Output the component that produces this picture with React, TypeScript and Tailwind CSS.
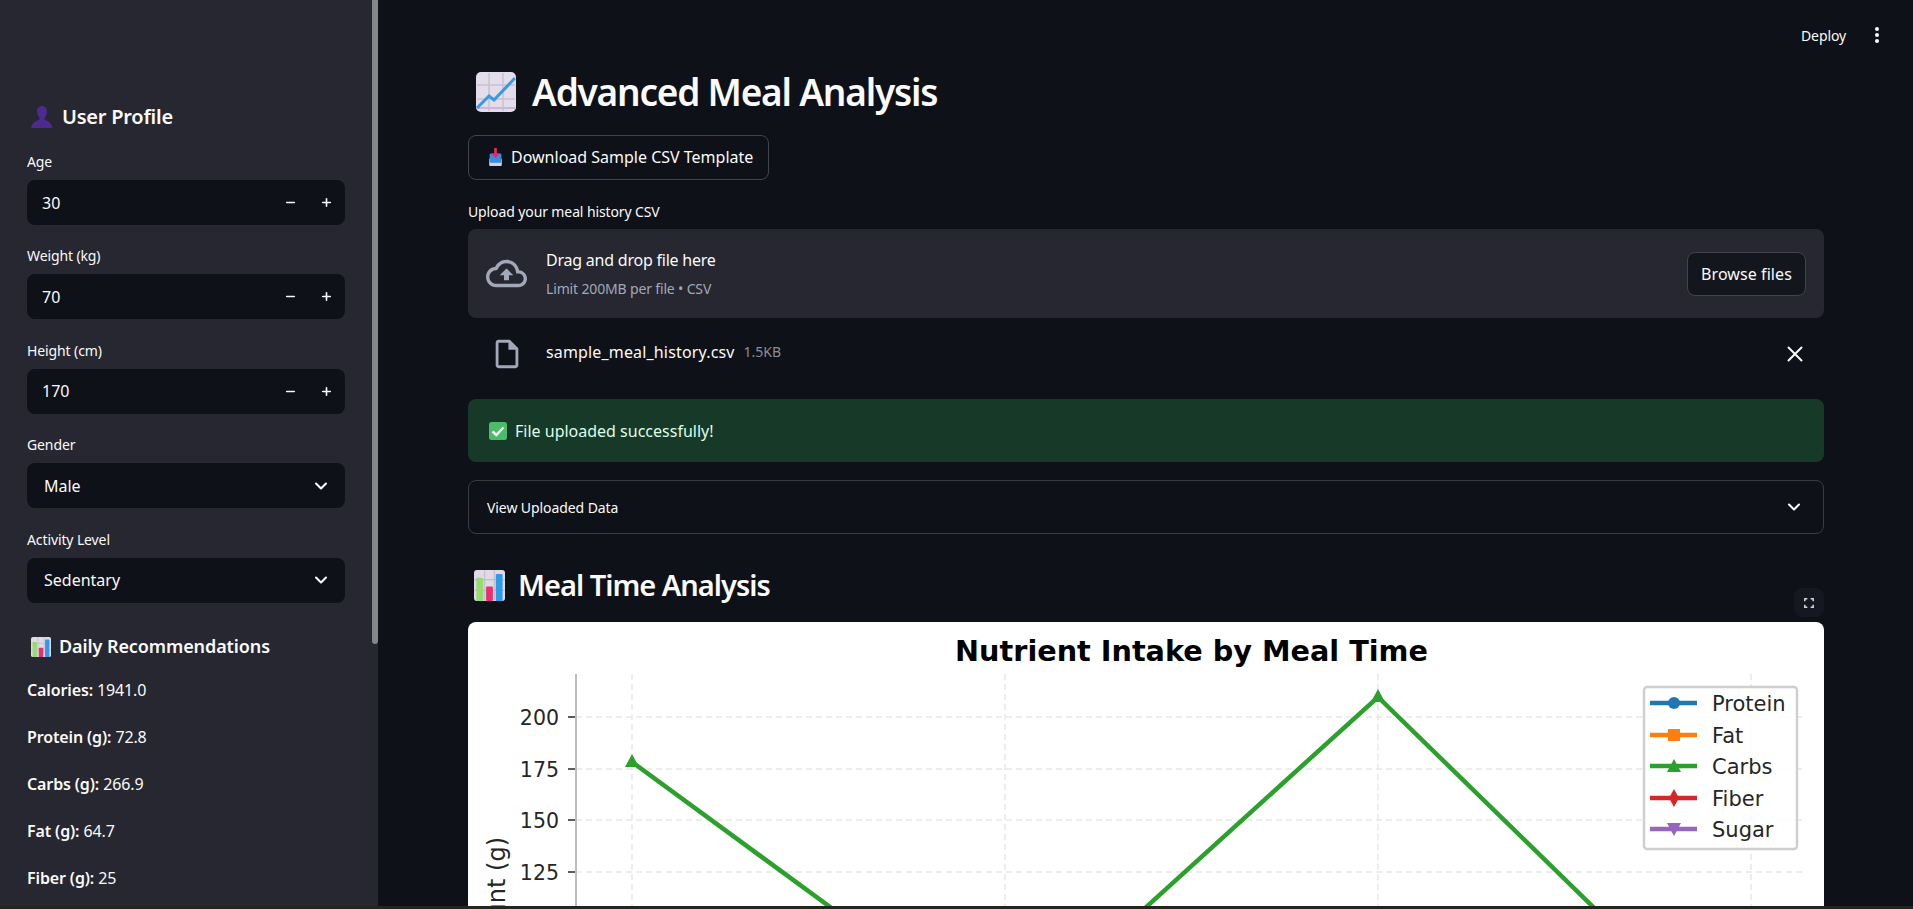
import { ChevronDown, Minus, Plus, X } from "lucide-react";

function ChartEmoji({ className }: { className?: string }) {
  return (
    <svg viewBox="0 0 40 40" className={className}>
      <rect width="40" height="40" rx="5" fill="#e3dcea" />
      <path d="M0 37h40v-2H0z" fill="#c9b8dc" />
      <path d="M13 1v38M27 1v38M1 13h38M1 27h38" stroke="#c8c0d0" strokeWidth="1.5" />
      <path d="M1 36 L13 24 L18 28 L39 6" fill="none" stroke="#3a9ae0" strokeWidth="3" />
    </svg>
  );
}

function BarsEmoji({ className }: { className?: string }) {
  return (
    <svg viewBox="0 0 32 32" className={className}>
      <rect width="32" height="32" rx="3" fill="#e0d9e6" />
      <path d="M11 0v32M21 0v32M0 10h32M0 21h32" stroke="#c4bccc" strokeWidth="1.2" />
      <rect x="2.5" y="8" width="7" height="24" rx="1" fill="#93dc6e" />
      <rect x="12.5" y="17" width="7" height="15" rx="1" fill="#e9306f" />
      <rect x="22.5" y="4" width="7" height="28" rx="1" fill="#2e9bea" />
    </svg>
  );
}

function InboxEmoji({ className }: { className?: string }) {
  return (
    <svg viewBox="0 0 16 20" className={className}>
      <path d="M1 12h14v7a1 1 0 0 1-1 1H2a1 1 0 0 1-1-1z" fill="#d9cfe4" />
      <rect x="1.5" y="6" width="13" height="10.5" rx="1.5" fill="#2f8fe0" />
      <path d="M6.5 0h3v6h3L8 11 3.500 6h3z" fill="#e22c5e" />
    </svg>
  );
}

function CheckEmoji({ className }: { className?: string }) {
  return (
    <svg viewBox="0 0 18 18" className={className}>
      <rect width="18" height="18" rx="2.500" fill="#4cbb6c" />
      <path d="M3.500 9.500l3.800 3.500 7.200-7.500" fill="none" stroke="#f2f7f2" strokeWidth="2.400" />
    </svg>
  );
}

function UserEmoji({ className }: { className?: string }) {
  return (
    <svg viewBox="0 0 22 22" className={className}>
      <path
        d="M11 0c3.200 0 5 2.400 5 5.500 0 2.500-1 4.800-2.500 6v2c2.500 1.300 7 2.500 8 8.500H0c1-6 5.500-7.200 8.500-8.500v-2C7 10.300 6 8 6 5.500 6 2.400 7.800 0 11 0z"
        fill="#4c2a8f"
      />
    </svg>
  );
}

function NumberField({ label, value }: { label: string; value: string }) {
  return (
    <div>
      <div className="h-[22px] mb-[7px] text-[14px] leading-[22px] tracking-[-0.008em] text-[#fafafa]">{label}</div>
      <div className="flex h-[45px] items-center rounded-lg bg-[#0e1117] pl-[15px] pr-[12px] text-[#fafafa]">
        <span className="flex-1 text-[16px]">{value}</span>
        <Minus size={13} strokeWidth={3} className="mr-[23px]" />
        <Plus size={13} strokeWidth={3} />
      </div>
    </div>
  );
}

function SelectField({ label, value }: { label: string; value: string }) {
  return (
    <div>
      <div className="h-[22px] mb-[7px] text-[14px] leading-[22px] tracking-[-0.008em] text-[#fafafa]">{label}</div>
      <div className="flex h-[45px] items-center rounded-lg bg-[#0e1117] pl-[17px] pr-[14px] text-[#fafafa]">
        <span className="flex-1 text-[16px]">{value}</span>
        <ChevronDown size={20} strokeWidth={2.500} />
      </div>
    </div>
  );
}

const RECOMMENDATIONS = [
  { name: "Calories:", value: "1941.0" },
  { name: "Protein (g):", value: "72.8" },
  { name: "Carbs (g):", value: "266.9" },
  { name: "Fat (g):", value: "64.7" },
  { name: "Fiber (g):", value: "25" },
];

function Sidebar() {
  return (
    <aside className="relative h-full w-[378px] shrink-0 overflow-hidden bg-[#262730] pl-[27px] pr-[33px] pt-[103px]">
      <h2 className="flex h-[28px] items-center text-[20px] font-semibold tracking-[-0.012em] text-[#fafafa]">
        <UserEmoji className="ml-[4px] mr-[9px] h-[22px] w-[22px]" />
        User Profile
      </h2>
      <div className="mt-[20px] flex flex-col gap-[20.400px]">
        <NumberField label="Age" value="30" />
        <NumberField label="Weight (kg)" value="70" />
        <NumberField label="Height (cm)" value="170" />
        <SelectField label="Gender" value="Male" />
        <SelectField label="Activity Level" value="Sedentary" />
      </div>
      <h2 className="mt-[30px] flex h-[28px] items-center text-[18px] font-semibold tracking-[-0.005em] text-[#fafafa]">
        <BarsEmoji className="ml-[4px] mr-[8px] h-[20px] w-[20px]" />
        Daily Recommendations
      </h2>
      <div className="mt-[17.500px] flex flex-col gap-[23px]">
        {RECOMMENDATIONS.map((r) => (
          <p key={r.name} className="h-[24px] text-[16px] leading-[24px] tracking-[-0.008em] text-[#fafafa]">
            <strong className="font-semibold">{r.name}</strong> {r.value}
          </p>
        ))}
      </div>
      {/* scrollbar thumb */}
      <div className="absolute right-0 top-0 h-[644px] w-[6px] rounded-b bg-[#85858c]" />
    </aside>
  );
}

const Y_TICKS = [
  { label: "200", y: 95 },
  { label: "175", y: 147 },
  { label: "150", y: 198 },
  { label: "125", y: 250 },
];

const V_GRID = [164, 537, 910, 1283];

function Chart() {
  return (
    <svg viewBox="0 0 1356 640" className="block h-[640px] w-full font-['DejaVu_Sans',sans-serif]">
      <text x="723.500" y="39" textAnchor="middle" fontSize="28.700" fontWeight="700" fill="#000">
        Nutrient Intake by Meal Time
      </text>
      {V_GRID.map((x) => (
        <line key={x} x1={x} x2={x} y1="52" y2="640" stroke="#e8e8e8" strokeWidth="1.500" strokeDasharray="6 4" />
      ))}
      {Y_TICKS.map((t) => (
        <g key={t.label}>
          <line x1="108" x2="1338" y1={t.y} y2={t.y} stroke="#e8e8e8" strokeWidth="1.500" strokeDasharray="6 4" />
          <line x1="100" x2="108" y1={t.y} y2={t.y} stroke="#262626" strokeWidth="1.500" />
          <text x="91" y={t.y + 8} textAnchor="end" fontSize="20.500" fill="#262626">
            {t.label}
          </text>
        </g>
      ))}
      <line x1="108" x2="108" y1="52" y2="640" stroke="#bdbdbd" strokeWidth="2" />
      <text transform="translate(36.500,215) rotate(-90)" textAnchor="end" fontSize="24" fill="#262626">
        Amount (g)
      </text>
      <polyline points="164,140 537,413 910,75 1283,439" fill="none" stroke="#2ca02c" strokeWidth="4.500" />
      <path d="M164 132l7 13h-14z" fill="#2ca02c" />
      <path d="M910 67l7 13h-14z" fill="#2ca02c" />

      <rect x="1176" y="65" width="153" height="162" rx="3" fill="#fff" fillOpacity="0.85" stroke="#cfcfcf" strokeWidth="2.500" />
      <line x1="1182" x2="1229" y1="81" y2="81" stroke="#1f77b4" strokeWidth="4.500" />
      <circle cx="1206" cy="81" r="6" fill="#1f77b4" />
      <text x="1244" y="89" fontSize="21" fill="#262626">Protein</text>
      <line x1="1182" x2="1229" y1="113" y2="113" stroke="#ff7f0e" strokeWidth="4.500" />
      <rect x="1200" y="107" width="12" height="12" fill="#ff7f0e" />
      <text x="1244" y="121" fontSize="21" fill="#262626">Fat</text>
      <line x1="1182" x2="1229" y1="144" y2="144" stroke="#2ca02c" strokeWidth="4.500" />
      <path d="M1206 137l7 13h-14z" fill="#2ca02c" />
      <text x="1244" y="152" fontSize="21" fill="#262626">Carbs</text>
      <line x1="1182" x2="1229" y1="176" y2="176" stroke="#d62728" strokeWidth="4.500" />
      <path d="M1206 167l5 9-5 9-5-9z" fill="#d62728" />
      <text x="1244" y="184" fontSize="21" fill="#262626">Fiber</text>
      <line x1="1182" x2="1229" y1="207" y2="207" stroke="#9467bd" strokeWidth="4.500" />
      <path d="M1206 214l-7-13h14z" fill="#9467bd" />
      <text x="1244" y="215" fontSize="21" fill="#262626">Sugar</text>
    </svg>
  );
}

function MainPanel() {
  return (
    <main className="relative h-full min-w-0 flex-1 overflow-hidden bg-[#0e1117] pl-[90px] pr-[89px] pt-[62px] text-[#fafafa]">
      {/* top toolbar */}
      <div className="absolute right-[34px] top-[25px] flex h-[20px] items-center gap-[29px] text-[14px] tracking-[-0.008em]">
        <span>Deploy</span>
        <span className="flex flex-col gap-[2px]">
          <span className="h-[4px] w-[4px] rounded-full bg-[#fafafa]" />
          <span className="h-[4px] w-[4px] rounded-full bg-[#fafafa]" />
          <span className="h-[4px] w-[4px] rounded-full bg-[#fafafa]" />
        </span>
      </div>

      <h1 className="flex h-[60px] items-center text-[37px] font-semibold tracking-[-0.033em]">
        <ChartEmoji className="ml-[8px] mr-[16px] h-[40px] w-[40px]" />
        Advanced Meal Analysis
      </h1>

      <button className="mt-[13px] flex h-[45px] w-[301px] items-center rounded-lg border border-[#41444c] bg-[#0e1117] pb-[1px] pl-[19px] text-[16px]">
        <InboxEmoji className="mr-[8px] h-[18px] w-[15px]" />
        Download Sample CSV Template
      </button>

      <div className="mt-[21px] h-[22px] text-[14px] leading-[22px] tracking-[-0.008em]">Upload your meal history CSV</div>

      <section className="mt-[6px] flex h-[89px] items-center rounded-lg bg-[#262730] pl-[18px] pr-[18px]">
        <svg viewBox="0 0 24 24" className="mr-[19px] h-[41px] w-[41px] fill-[#a3a8b8]">
          <path d="M19.35 10.04C18.67 6.59 15.64 4 12 4 9.11 4 6.600 5.640 5.350 8.040 2.340 8.360 0 10.910 0 14c0 3.310 2.690 6 6 6h13c2.760 0 5-2.240 5-5 0-2.640-2.050-4.780-4.650-4.960zM19 18H6c-2.210 0-4-1.790-4-4 0-2.050 1.530-3.760 3.560-3.970l1.070-.11.5-.95C8.080 7.140 9.940 6 12 6c2.620 0 4.880 1.860 5.390 4.430l.3 1.500 1.530.11c1.560.1 2.780 1.410 2.780 2.960 0 1.650-1.350 3-3 3zM8 13h2.550v3h2.900v-3H16l-4-4z" />
        </svg>
        <div className="flex-1">
          <div className="h-[28px] text-[16px] leading-[28px] tracking-[-0.014em]">Drag and drop file here</div>
          <div className="mt-[3px] h-[24px] text-[14px] leading-[24px] tracking-[-0.011em] text-[#a3a8b8]">Limit 200MB per file • CSV</div>
        </div>
        <button className="h-[44px] w-[119px] rounded-lg border border-[#41444c] bg-[#14161e] text-[16px] tracking-[0.005em]">Browse files</button>
      </section>

      <div className="mt-[14px] flex h-[44px] items-center">
        <svg viewBox="0 0 24 24" className="ml-[22px] mr-[22px] h-[34px] w-[34px] fill-[#a3a8b8]">
          <path d="M14 2H6c-1.100 0-1.990.9-1.990 2L4 20c0 1.100.89 2 1.990 2H18c1.100 0 2-.9 2-2V8l-6-6zM6 20V4h7v5h5v11H6z" />
        </svg>
        <span className="-mt-[5px] text-[16px] tracking-[0.01em]">sample_meal_history.csv</span>
        <span className="-mt-[5px] ml-[9px] flex-1 text-[14px] text-[#8b8e99]">1.5KB</span>
        <X size={26} strokeWidth={1.800} className="mr-[16px]" />
      </div>

      <div className="mt-[23px] flex h-[63px] items-center rounded-lg bg-[#173928] pl-[21px] text-[16px] text-[#dffde9]">
        <CheckEmoji className="mr-[8px] h-[18px] w-[18px]" />
        File uploaded successfully!
      </div>

      <div className="mt-[18px] flex h-[54px] items-center justify-between rounded-lg border border-[#3a3c44] pl-[18px] pr-[19px] text-[14px] tracking-[-0.006em]">
        <span>View Uploaded Data</span>
        <ChevronDown size={20} strokeWidth={2.500} />
      </div>

      <h2 className="mt-[31px] flex h-[40px] items-center text-[29px] font-semibold tracking-[-0.034em]">
        <BarsEmoji className="ml-[6px] mr-[13px] h-[31px] w-[31px]" />
        Meal Time Analysis
      </h2>

      <div className="relative mt-[17px] rounded-lg bg-white">
        <div className="absolute -top-[34px] right-0 flex h-[29px] w-[30px] items-center justify-center rounded-lg bg-[#151821]">
          <svg viewBox="0 0 12 12" className="h-[10px] w-[10px] fill-none stroke-[#d8d8dc] stroke-[1.8]">
            <path d="M1 4V1h3M8 1h3v3M11 8v3H8M4 11H1V8" />
          </svg>
        </div>
        <Chart />
      </div>
    </main>
  );
}

export default function App() {
  return (
    <div className="flex h-screen flex-col overflow-hidden font-['Noto_Sans',sans-serif]">
      <div className="flex min-h-0 flex-1">
        <Sidebar />
        <MainPanel />
      </div>
      {/* window edge at the bottom of the capture */}
      <div className="h-[3px] shrink-0 bg-[#25241f]" />
    </div>
  );
}
